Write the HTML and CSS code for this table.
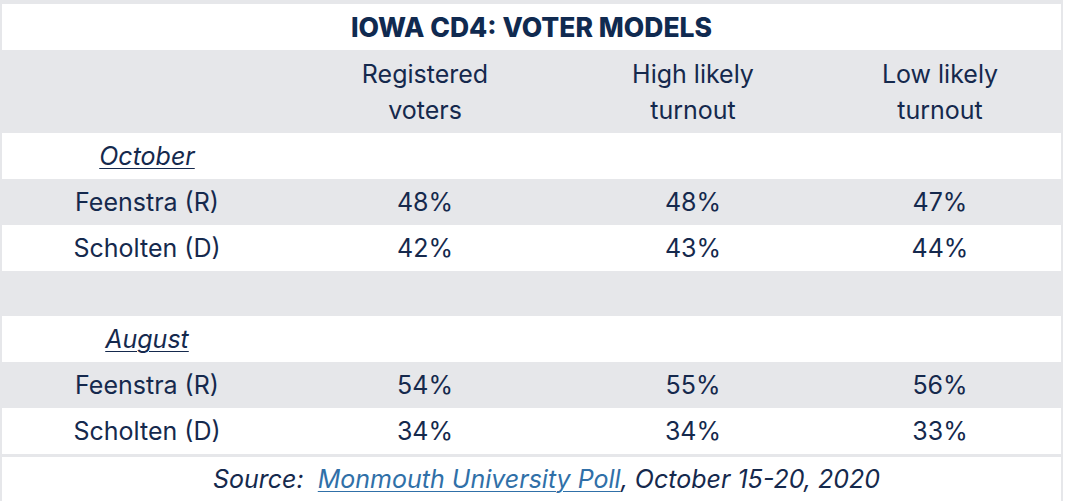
FILE: index.html
```html
<!DOCTYPE html>
<html>
<head>
<meta charset="utf-8">
<link rel="stylesheet" href="styles.css">
</head>
<body>
<div class="frame">
  <div class="table">
    <div class="title">IOWA CD4: VOTER MODELS</div>
    <div class="row head">
      <div class="cell"></div>
      <div class="cell">Registered<br>voters</div>
      <div class="cell">High likely<br>turnout</div>
      <div class="cell">Low likely<br>turnout</div>
    </div>
    <div class="row white">
      <div class="cell month">October</div>
    </div>
    <div class="row gray">
      <div class="cell">Feenstra (R)</div>
      <div class="cell">48%</div>
      <div class="cell">48%</div>
      <div class="cell">47%</div>
    </div>
    <div class="row white">
      <div class="cell">Scholten (D)</div>
      <div class="cell">42%</div>
      <div class="cell">43%</div>
      <div class="cell">44%</div>
    </div>
    <div class="row gray spacer"></div>
    <div class="row white">
      <div class="cell month">August</div>
    </div>
    <div class="row gray">
      <div class="cell">Feenstra (R)</div>
      <div class="cell">54%</div>
      <div class="cell">55%</div>
      <div class="cell">56%</div>
    </div>
    <div class="row white">
      <div class="cell">Scholten (D)</div>
      <div class="cell">34%</div>
      <div class="cell">34%</div>
      <div class="cell">33%</div>
    </div>
    <div class="source">Source:&nbsp; <a href="#">Monmouth University Poll</a>, October 15-20, 2020</div>
  </div>
</div>
</body>
</html>
```
FILE: styles.css
```css
html, body {
  margin: 0;
  padding: 0;
  background: #ffffff;
}
body {
  font-family: Inter, "Liberation Sans", sans-serif;
  color: #15294d;
}
.frame {
  width: 1063px;
  height: 502px;
  overflow: hidden;
}
.table {
  background: #e6e7ea;
  padding: 4px 2px 0 2px;
  display: flex;
  flex-direction: column;
}
.title {
  background: #ffffff;
  height: 46px;
  display: flex;
  align-items: center;
  justify-content: center;
  font-weight: 800;
  font-size: 26.5px;
  color: #102a50;
}
.row {
  display: grid;
  grid-template-columns: 290px 266px 270px 224px;
  height: 46px;
  align-items: center;
  font-size: 25px;
}
.row.head {
  height: 83px;
  line-height: 36px;
}
.row.white { background: #ffffff; }
.row.gray { background: #e6e7ea; }
.row.spacer { height: 45px; }
.cell {
  text-align: center;
}
.month {
  font-style: italic;
  text-decoration: underline;
  text-underline-offset: 3px;
  text-decoration-thickness: 1px;
}
.source {
  margin-top: 3px;
  background: #ffffff;
  height: 44px;
  display: flex;
  align-items: center;
  justify-content: center;
  padding-left: 30px;
  font-size: 25px;
  font-style: italic;
  white-space: pre;
}
.source a {
  color: #3070a8;
  text-decoration-thickness: 1px;
  text-underline-offset: 3px;
}
```
